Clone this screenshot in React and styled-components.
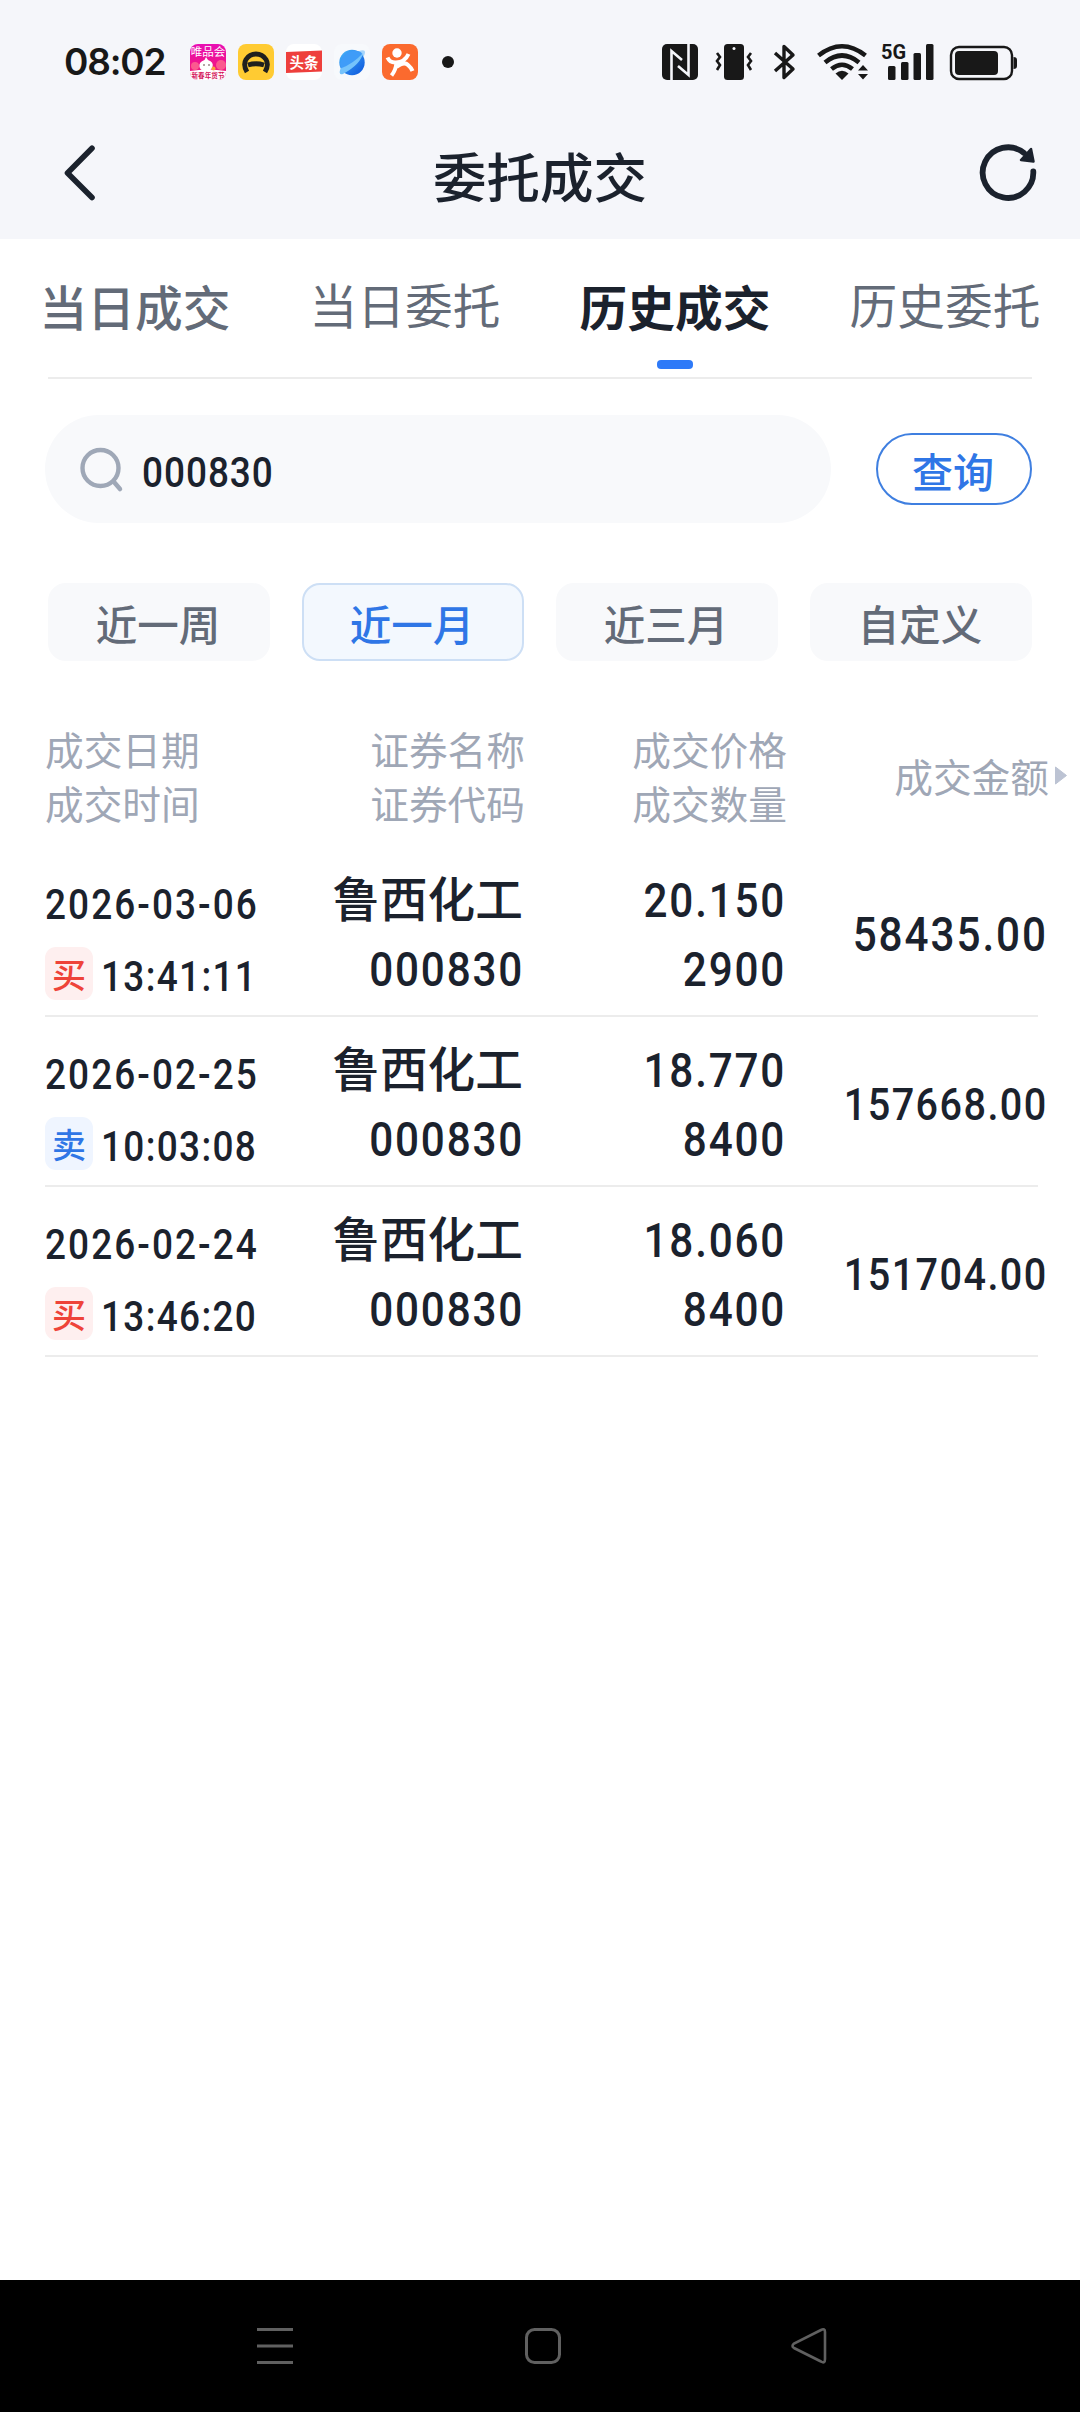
import React, { useState } from "react";
import styled, { createGlobalStyle } from "styled-components";

const tabs = [
  { label: "当日成交", weight: 500, shift: 2 },
  { label: "当日委托", weight: 400, shift: 0 },
  { label: "历史成交", weight: 700, shift: 2 },
  { label: "历史委托", weight: 400, shift: 0 },
];

const ranges = ["近一周", "近一月", "近三月", "自定义"];

const deals = [
  {
    date: "2026-03-06",
    time: "13:41:11",
    side: "buy",
    name: "鲁西化工",
    code: "000830",
    price: "20.150",
    count: "2900",
    amount: "58435.00",
  },
  {
    date: "2026-02-25",
    time: "10:03:08",
    side: "sell",
    name: "鲁西化工",
    code: "000830",
    price: "18.770",
    count: "8400",
    amount: "157668.00",
  },
  {
    date: "2026-02-24",
    time: "13:46:20",
    side: "buy",
    name: "鲁西化工",
    code: "000830",
    price: "18.060",
    count: "8400",
    amount: "151704.00",
  },
];

function AppIcons() {
  return (
    <svg width="270" height="36" viewBox="0 0 270 36">
      <defs>
        <linearGradient id="pink" x1="0" y1="0" x2="0" y2="1">
          <stop offset="0" stopColor="#e80fb4" />
          <stop offset="1" stopColor="#f5196c" />
        </linearGradient>
        <linearGradient id="planet" x1="0" y1="0" x2="1" y2="1">
          <stop offset="0" stopColor="#48b5fb" />
          <stop offset="1" stopColor="#0b55dc" />
        </linearGradient>
        <clipPath id="tile">
          <rect width="36" height="36" rx="8" />
        </clipPath>
      </defs>
      <g clipPath="url(#tile)">
        <rect width="36" height="36" fill="url(#pink)" />
        <path d="M0 27Q18 24 36 27V36H0Z" fill="#fff" />
        <circle cx="5" cy="22" r="4" fill="#fb5a8f" />
        <circle cx="31" cy="21" r="5" fill="#fb5a8f" />
        <path d="M16 13l2 3q6 2 4.500 7q-1 4-6.500 4t-6.500-4q-1-5 5-7z" fill="#fff" />
        <circle cx="14" cy="21" r="0.8" fill="#533" />
        <circle cx="19" cy="21" r="0.8" fill="#533" />
        <circle cx="23.500" cy="24.500" r="2" fill="#f9a13a" />
        <IconText x="18" y="12" fontSize="11.500" fill="#fff">唯品会</IconText>
        <IconText x="18" y="33.500" fontSize="6.600" fill="#d4145a" fontWeight="700">新春年货节</IconText>
      </g>
      <g transform="translate(48 0)">
        <rect width="36" height="36" rx="8" fill="#ffcb32" />
        <path
          d="M9 28Q4.800 21 8 15.500Q11.500 10 18 10T28 15.500Q31.200 21 27 28M10 21Q18 18.500 26 21"
          fill="none"
          stroke="#20201e"
          strokeWidth="4.800"
        />
      </g>
      <g transform="translate(96 0)">
        <rect width="36" height="36" rx="8" fill="#fff" />
        <path d="M0 8L36 6.500V27.500L0 29Z" fill="#ee3f3c" />
        <IconText x="18" y="23.500" fontSize="14.500" fill="#fff" fontWeight="700">头条</IconText>
      </g>
      <g transform="translate(144 0)">
        <rect width="36" height="36" rx="8" fill="#f7f9fc" />
        <path d="M24 7.500Q31 5 31 8T27 17Z" fill="#a7d6fb" />
        <circle cx="18" cy="18.500" r="12.700" fill="url(#planet)" />
        <path d="M6 19Q10 8 20 6.500Q28 7 28 10Q20 20 7 25Z" fill="#3f9cf8" />
        <path d="M6.500 24.500Q19 20 29 9Q27 20 9 30Q4 31.500 6.500 24.500Z" fill="#75c3fb" />
      </g>
      <g transform="translate(192 0)">
        <rect width="36" height="36" rx="8" fill="#fb6a2e" />
        <circle cx="15" cy="9" r="4.700" fill="#fff" />
        <path
          d="M5.500 13.500Q8 19 14 18.500Q23 18 26.500 10M14.500 18Q14 26 9.500 31.500M14.500 23Q22 17 26 21Q29.500 24 30.500 27"
          fill="none"
          stroke="#fff"
          strokeWidth="4"
        />
      </g>
      <circle cx="258" cy="18" r="6" fill="#181818" />
    </svg>
  );
}

function SystemIcons() {
  return (
    <svg width="360" height="44" viewBox="0 0 360 44">
      <g fill="#181818">
        <rect x="2" y="4" width="36" height="36" rx="5" />
        <path
          d="M11.500 40V11L22 20M28.500 4V35L18 26"
          fill="none"
          stroke="#f5f6fa"
          strokeWidth="2.600"
        />
        <rect x="64" y="4" width="20" height="36" rx="3.500" />
        <circle cx="74" cy="8.500" r="1.500" fill="#f5f6fa" />
        <path
          d="M57 13l3 4-3 4 3 4-3 5M91 13l-3 4 3 4-3 4 3 5"
          fill="none"
          stroke="#181818"
          strokeWidth="2.600"
        />
        <path
          d="M115 13L133 29L124 37.500V6.500L133 15L115 31"
          fill="none"
          stroke="#181818"
          strokeWidth="3.400"
          strokeLinejoin="round"
        />
        <g fill="none" stroke="#181818" strokeWidth="4.600">
          <path d="M158.500 15.500Q182 -3 205.500 15.500" />
          <path d="M165 22.500Q182 8.500 199 22.500" />
          <path d="M171.500 29Q182 20.500 192.500 29" />
        </g>
        <path d="M175.500 33.500Q182 28 188.500 33.500L182 40Z" />
        <path d="M203 25l5 5.500h-10zM203 39.500l5-5.500h-10z" />
        <rect x="228" y="26" width="7.500" height="14" rx="1.500" />
        <rect x="241" y="22" width="7.500" height="18" rx="1.500" />
        <rect x="253.500" y="13" width="7.500" height="27" rx="1.500" />
        <rect x="266" y="4" width="7.500" height="36" rx="1.500" />
        <NetText x="221" y="18.500">5G</NetText>
        <rect x="291" y="7" width="61" height="32" rx="8" fill="none" stroke="#181818" strokeWidth="2.400" />
        <rect x="295" y="11" width="43" height="24" rx="4" />
        <path d="M353.500 17q3.500 0 3.500 3v6q0 3-3.500 3z" />
      </g>
    </svg>
  );
}

function App() {
  const [tab, setTab] = useState(2);
  const [range, setRange] = useState(1);

  return (
    <Screen>
      <GlobalStyle />
      <Top>
        <StatusBar>
          <Clock>08:02</Clock>
          <AppIcons />
          <SystemIcons />
        </StatusBar>
        <TitleBar>
          <svg width="36" height="60" viewBox="0 0 36 60">
            <path
              d="M30 5.300L5.500 30L30 54.500"
              fill="none"
              stroke="#1b222d"
              strokeWidth="5.600"
              strokeLinecap="round"
              strokeLinejoin="round"
            />
          </svg>
          <Title>委托成交</Title>
          <svg width="60" height="60" viewBox="0 0 60 60">
            <path
              d="M55.300 28.500A25.300 25.300 0 1 1 46 10"
              fill="none"
              stroke="#1b222d"
              strokeWidth="5.800"
              strokeLinecap="round"
            />
            <path
              d="M53 6L55.500 18.500L43 17Z"
              fill="#1b222d"
              stroke="#1b222d"
              strokeWidth="2.500"
              strokeLinejoin="round"
            />
          </svg>
        </TitleBar>
      </Top>

      <Tabs>
        {tabs.map((t, i) => (
          <Tab
            key={t.label}
            $active={tab === i}
            $weight={t.weight}
            $shift={t.shift}
            onClick={() => setTab(i)}
          >
            {t.label}
          </Tab>
        ))}
      </Tabs>

      <SearchRow>
        <SearchBox>
          <svg width="46" height="46" viewBox="0 0 46 46">
            <circle cx="20.500" cy="21" r="18" fill="none" stroke="#9fa8b7" strokeWidth="4.400" />
            <path d="M34 35L40 42" stroke="#9fa8b7" strokeWidth="4.500" strokeLinecap="round" />
          </svg>
          <Digits $size={42} $track={0.026}>
            000830
          </Digits>
        </SearchBox>
        <QueryButton>查询</QueryButton>
      </SearchRow>

      <Ranges>
        {ranges.map((label, i) => (
          <Range key={label} $active={range === i} onClick={() => setRange(i)}>
            {label}
          </Range>
        ))}
      </Ranges>

      <TableHead>
        <HeadCell>
          成交日期
          <br />
          成交时间
        </HeadCell>
        <HeadCell $right>
          证券名称
          <br />
          证券代码
        </HeadCell>
        <HeadCell $right>
          成交价格
          <br />
          成交数量
        </HeadCell>
        <HeadCell $right>成交金额</HeadCell>
        <svg width="14" height="20" viewBox="0 0 14 20">
          <path d="M1.500 2L12.500 10.500L1.500 19Z" fill="#bcc3d3" stroke="#bcc3d3" strokeLinejoin="round" />
        </svg>
      </TableHead>

      {deals.map(d => (
        <Deal key={d.date}>
          <DateCell>
            <Digits $size={42} $track={0.056}>
              {d.date}
            </Digits>
            <TimeLine>
              <Side $side={d.side}>{d.side === "buy" ? "买" : "卖"}</Side>
              <Digits $size={42}>{d.time}</Digits>
            </TimeLine>
          </DateCell>
          <ValueCell>
            <Name>{d.name}</Name>
            <Digits $size={48} $track={0.042} $right>
              {d.code}
            </Digits>
          </ValueCell>
          <ValueCell>
            <Digits $size={48} $track={0.042} $right>
              {d.price}
            </Digits>
            <Digits $size={48} $track={0.042} $right>
              {d.count}
            </Digits>
          </ValueCell>
          <AmountCell>
            <Digits $size={d.amount.length > 8 ? 45 : 48} $track={d.amount.length > 8 ? 0.036 : 0.046} $right>
              {d.amount}
            </Digits>
          </AmountCell>
        </Deal>
      ))}

      <NavBar>
        <svg width="38" height="38" viewBox="0 0 38 38">
          <path d="M1 2.500H37M1 19H37M1 35.500H37" stroke="#606060" strokeWidth="3" />
        </svg>
        <svg width="38" height="38" viewBox="0 0 38 38">
          <rect x="2.500" y="2.500" width="33" height="33" rx="8" fill="none" stroke="#606060" strokeWidth="3" />
        </svg>
        <svg width="38" height="38" viewBox="0 0 38 38">
          <path
            d="M30 3Q34 1 34 5V32Q34 37 30 34.500L3 21Q0 19 3 16.500Z"
            fill="none"
            stroke="#606060"
            strokeWidth="2.600"
          />
        </svg>
      </NavBar>
    </Screen>
  );
}

const GlobalStyle = createGlobalStyle`
  * {
    box-sizing: border-box;
  }
  body {
    margin: 0;
    background: #fff;
  }
  svg {
    display: block;
    flex: none;
  }
  button {
    margin: 0;
    padding: 0;
    border: 0;
    background: none;
    font-family: inherit;
    white-space: nowrap;
  }
`;

const Screen = styled.div`
  display: flex;
  flex-direction: column;
  width: 1080px;
  height: 2412px;
  color: #1b222d;
  font-family: "Noto Sans CJK SC", sans-serif;
`;

const Top = styled.header`
  height: 239px;
  background: #f5f6fa;
`;

const StatusBar = styled.div`
  display: flex;
  align-items: center;
  height: 124px;
  padding: 0 60px 0 64px;

  svg:last-child {
    margin-left: auto;
  }
`;

const Clock = styled.div`
  width: 126px;
  color: #181818;
  font: 600 37px/38px Inter, sans-serif;
  letter-spacing: -1.2px;
`;

const IconText = styled.text`
  font-family: "Noto Sans CJK SC", sans-serif;
  text-anchor: middle;
`;

const NetText = styled.text`
  font: 700 20px Roboto, sans-serif;
`;

const TitleBar = styled.div`
  display: flex;
  justify-content: space-between;
  align-items: center;
  height: 98px;
  padding: 0 42px 0 62px;
`;

const Title = styled.h1`
  margin: 0;
  padding: 4px 0 0 4px;
  font-size: 53.500px;
  font-weight: 500;
  line-height: 60px;
`;

const Tabs = styled.nav`
  display: flex;
  justify-content: space-between;
  height: 140px;
  margin: 0 48px;
  border-bottom: 2px solid #ececec;
`;

const Tab = styled.button`
  display: flex;
  justify-content: center;
  position: relative;
  width: 192px;
  margin: 0 -9px;
  padding: ${({ $shift }) => $shift}px 0 0;
  color: ${({ $active }) => ($active ? "#1b222d" : "#636b78")};
  font-size: 47.700px;
  font-weight: ${({ $weight }) => $weight};
  line-height: 130px;

  &::after {
    content: "";
    display: ${({ $active }) => ($active ? "block" : "none")};
    position: absolute;
    left: 78px;
    bottom: 8px;
    width: 36px;
    height: 9px;
    border-radius: 4px;
    background: #2e7af8;
  }
`;

const SearchRow = styled.div`
  display: flex;
  justify-content: space-between;
  align-items: center;
  margin: 36px 48px 0 45px;
`;

const SearchBox = styled.div`
  display: flex;
  align-items: center;
  gap: 16px;
  width: 786px;
  height: 108px;
  padding: 8px 0 0 35px;
  border-radius: 54px;
  background: #f8f9fb;

  svg {
    margin-top: -6px;
  }
`;

const QueryButton = styled.button`
  width: 156px;
  height: 72px;
  padding: 2px 2px 0 0;
  border: 2px solid #3f7fe0;
  border-radius: 36px;
  color: #2f76e6;
  font-size: 41px;
  font-weight: 500;
  line-height: 60px;
`;

const Ranges = styled.div`
  display: grid;
  grid-template-columns: repeat(4, 1fr);
  gap: 32px;
  margin: 60px 48px 0;
`;

const Range = styled.button`
  height: 78px;
  padding: 2px 2px 0 0;
  border: 2px solid ${({ $active }) => ($active ? "#cddff5" : "#f8f9fb")};
  border-radius: 18px;
  background: ${({ $active }) => ($active ? "#f3f8fe" : "#f8f9fb")};
  color: ${({ $active }) => ($active ? "#2f76e6" : "#636b78")};
  font-size: 41.500px;
  font-weight: 500;
  line-height: 60px;
`;

const TableHead = styled.div`
  display: grid;
  grid-template-columns: 160px 320px 262px 262px 19px;
  align-items: center;
  height: 186px;
  padding: 60px 0 18px 45px;

  svg {
    margin-left: 5px;
  }
`;

const HeadCell = styled.div`
  color: #9fa7b6;
  font-size: 38.700px;
  line-height: 54px;
  text-align: ${({ $right }) => ($right ? "right" : "left")};
  white-space: nowrap;
`;

const Deal = styled.div`
  display: grid;
  grid-template-columns: 216px 262px 262px 1fr;
  height: 170px;
  margin: 0 42px 0 45px;
  border-bottom: 2px solid #ececec;
`;

const DateCell = styled.div`
  padding-top: 31px;
`;

// Roboto squeezed a little and spaced out again, close to a DIN face
const Digits = styled.div`
  margin-right: ${({ $right }) => ($right ? -1 : 0)}px;
  transform: scaleX(0.88);
  transform-origin: ${({ $right }) => ($right ? "right" : "left")} center;
  font-family: Roboto, sans-serif;
  font-size: ${({ $size }) => $size}px;
  font-weight: 500;
  letter-spacing: ${({ $track = 0.036 }) => $track}em;
  line-height: 54px;
  white-space: nowrap;
`;

const TimeLine = styled.div`
  display: flex;
  gap: 8px;
  margin-top: 15px;

  ${Digits} {
    padding-top: 3px;
  }
`;

const sideColors = {
  buy: { text: "#ee4339", bg: "#feefef" },
  sell: { text: "#2f76e6", bg: "#eff5ff" },
};

const Side = styled.span`
  flex: none;
  width: 48px;
  height: 53px;
  border-radius: 11px;
  background: ${({ $side }) => sideColors[$side].bg};
  color: ${({ $side }) => sideColors[$side].text};
  font-size: 34px;
  font-weight: 500;
  line-height: 54px;
  text-align: center;
`;

const ValueCell = styled.div`
  display: flex;
  flex-direction: column;
  gap: 15px;
  padding-top: 27px;
  text-align: right;
`;

const Name = styled.div`
  margin: -4px 0 4px;
  font-size: 47.700px;
  font-weight: 500;
  line-height: 54px;
`;

const AmountCell = styled.div`
  display: flex;
  justify-content: flex-end;
  align-items: center;
  margin-right: -9px;
  padding-top: 7px;
`;

const NavBar = styled.footer`
  display: flex;
  justify-content: space-between;
  height: 132px;
  margin-top: auto;
  padding: 47px 251px 0 256px;
  background: #000;
`;

export default App;
